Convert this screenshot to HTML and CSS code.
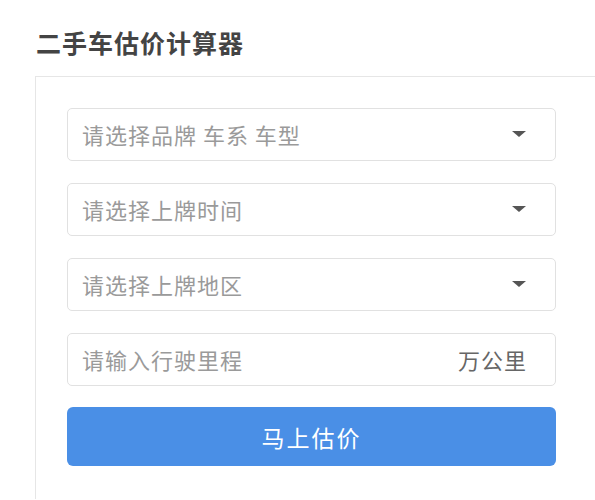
FILE: index.html
```html
<!DOCTYPE html>
<html lang="zh-CN">
<head>
  <meta charset="UTF-8">
  <meta name="viewport" content="width=device-width, initial-scale=1.0">
  <title>二手车估价计算器</title>
  <link rel="stylesheet" href="styles.css">
</head>
<body>
  <div class="page">
    <h1 class="title">二手车估价计算器</h1>
    <div class="card">
      <div class="field select">
        <span class="placeholder">请选择品牌 车系 车型</span>
        <span class="caret"></span>
      </div>
      <div class="field select">
        <span class="placeholder">请选择上牌时间</span>
        <span class="caret"></span>
      </div>
      <div class="field select">
        <span class="placeholder">请选择上牌地区</span>
        <span class="caret"></span>
      </div>
      <div class="field">
        <input type="text" class="mileage" placeholder="请输入行驶里程">
        <span class="unit">万公里</span>
      </div>
      <button class="submit">马上估价</button>
    </div>
  </div>
</body>
</html>
```

FILE: styles.css
```css
body {
  margin: 0;
  background: #fff;
  font-family: "Noto Sans CJK SC", "Noto Sans", sans-serif;
  overflow: hidden;
}
.page {
  padding: 26px 0 0 35px;
}
.title {
  margin: 0 0 18px 1px;
  font-size: 25px;
  line-height: 32px;
  font-weight: bold;
  letter-spacing: 1px;
  color: #444;
}
.card {
  border: 1px solid #e6e6e6;
  border-right: none;
  border-bottom: none;
  padding: 31px 0 33px 31px;
  display: flex;
  flex-direction: column;
  gap: 22px;
}
.field {
  width: 489px;
  height: 53px;
  box-sizing: border-box;
  border: 1px solid #e1e1e1;
  border-radius: 5px;
  background: #fff;
  display: flex;
  align-items: center;
  padding: 0 29px 2px 14px;
}
.placeholder,
.mileage {
  flex: 1;
  font-size: 22px;
  letter-spacing: 1px;
  color: #9a9a9a;
}
.mileage {
  border: none;
  outline: none;
  padding: 0;
  font-family: inherit;
  background: transparent;
}
.mileage::placeholder {
  color: #9a9a9a;
}
.caret {
  width: 0;
  height: 0;
  border-left: 7px solid transparent;
  border-right: 7px solid transparent;
  border-top: 6px solid #555;
}
.unit {
  font-size: 22px;
  letter-spacing: 1px;
  color: #666;
  margin-right: -1px;
}
.submit {
  width: 489px;
  height: 59px;
  margin-top: -1px;
  border: none;
  border-radius: 6px;
  background-color: #4a8fe6;
  color: #fff;
  font-family: inherit;
  font-size: 23px;
  letter-spacing: 2px;
  cursor: pointer;
}
```
